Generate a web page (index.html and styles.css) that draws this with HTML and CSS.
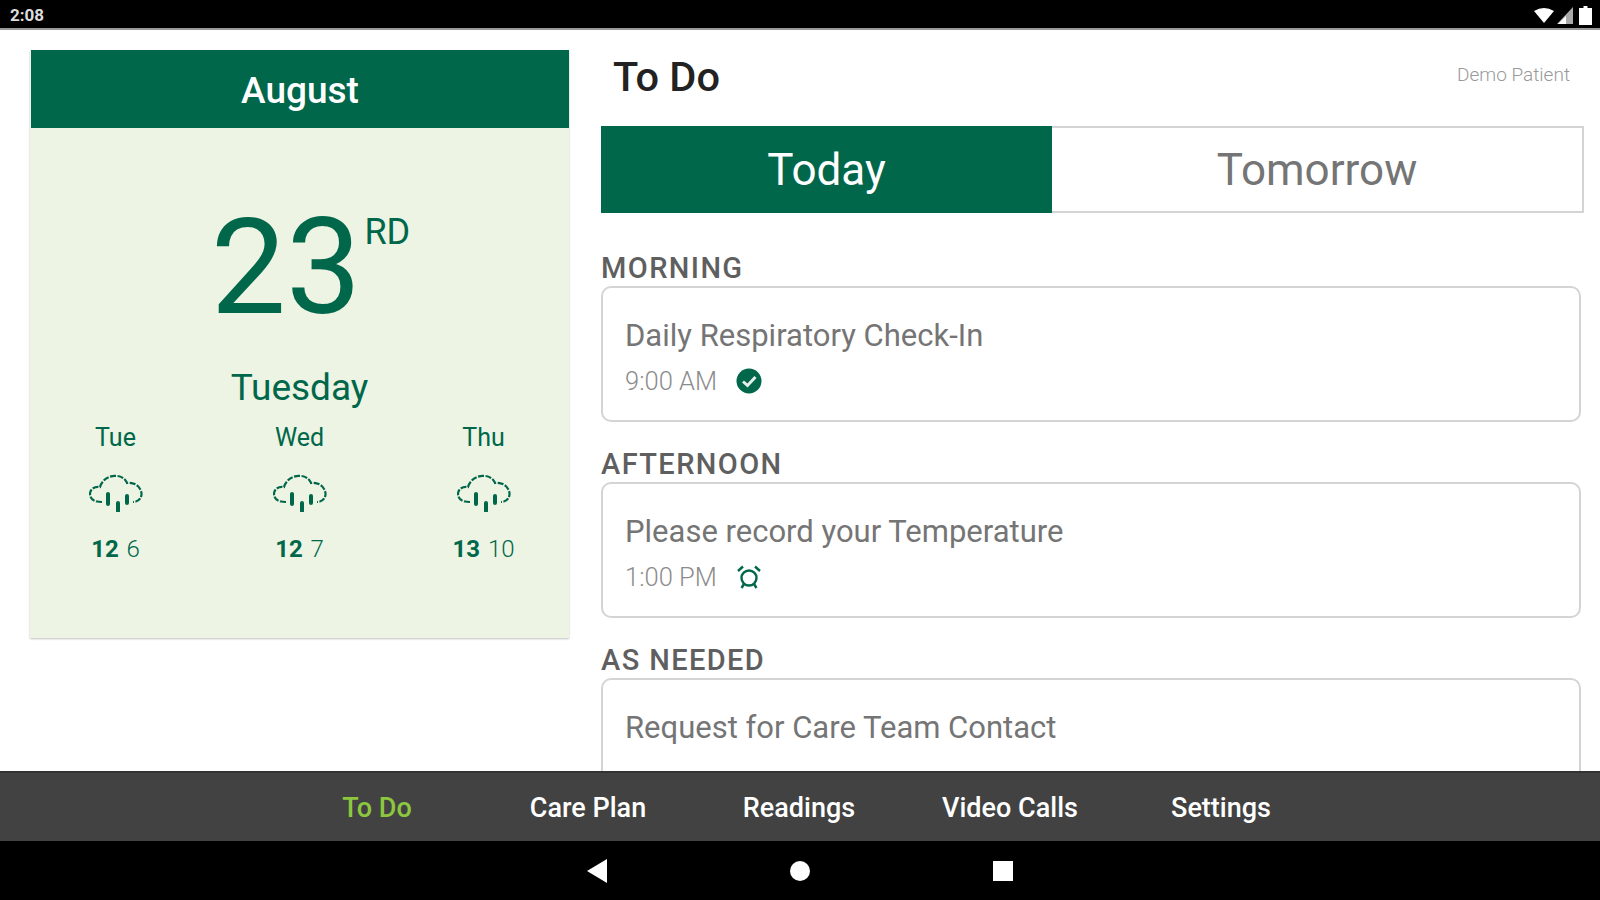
FILE: index.html
```html
<!DOCTYPE html>
<html lang="en">
<head>
  <meta charset="UTF-8">
  <title>To Do</title>
  <link rel="stylesheet" href="styles.css">
</head>
<body>
  <div class="status-bar">
    <span class="clock">2:08</span>
    <div class="status-icons">
      <svg width="20" height="16" viewBox="0 0 20 16"><path d="M0 4 Q10 -2 20 4 L10 16 Z" fill="#fff"/></svg>
      <svg width="16" height="17" viewBox="0 0 16 17"><path d="M16 0 V17 H0 Z" fill="#aaa"/><path d="M9 9 V17 H1 Z" fill="#fff"/></svg>
      <svg class="battery" width="13" height="19" viewBox="0 0 13 19"><path d="M4.5 0 H8.5 V2 H13 V19 H0 V2 H4.5 Z" fill="#fff"/></svg>
    </div>
  </div>

  <div class="main">
    <aside class="calendar">
      <div class="month">August</div>
      <div class="calendar-body">
        <div class="date"><span class="day-num">23</span><span class="suffix">RD</span></div>
        <div class="weekday">Tuesday</div>
        <div class="forecast">
          <div class="fc-day">
            <div class="fc-name">Tue</div>
            <svg class="cloud" width="54" height="38" viewBox="0 0 54 38"><use href="#cloud-icon"/></svg>
            <div class="fc-temp"><b>12</b> 6</div>
          </div>
          <div class="fc-day">
            <div class="fc-name">Wed</div>
            <svg class="cloud" width="54" height="38" viewBox="0 0 54 38"><use href="#cloud-icon"/></svg>
            <div class="fc-temp"><b>12</b> 7</div>
          </div>
          <div class="fc-day">
            <div class="fc-name">Thu</div>
            <svg class="cloud" width="54" height="38" viewBox="0 0 54 38"><use href="#cloud-icon"/></svg>
            <div class="fc-temp"><b>13</b> 10</div>
          </div>
        </div>
      </div>
    </aside>

    <section class="todo">
      <div class="todo-head">
        <h1>To Do</h1>
        <span class="patient">Demo Patient</span>
      </div>
      <div class="tabs">
        <div class="tab active">Today</div>
        <div class="tab">Tomorrow</div>
      </div>

      <h2>MORNING</h2>
      <div class="item">
        <div class="item-title">Daily Respiratory Check-In</div>
        <div class="item-meta">
          <span>9:00 AM</span>
          <svg width="26" height="26" viewBox="0 0 26 26"><circle cx="13" cy="13" r="12.5" fill="#00674b"/><path d="M7 13.5 L11.5 17.5 L19.5 9" fill="none" stroke="#e4efe9" stroke-width="3"/></svg>
        </div>
      </div>

      <h2>AFTERNOON</h2>
      <div class="item">
        <div class="item-title">Please record your Temperature</div>
        <div class="item-meta">
          <span>1:00 PM</span>
          <svg width="26" height="26" viewBox="0 0 26 26" fill="none" stroke="#00674b" stroke-width="2.4"><circle cx="13" cy="14" r="7.5"/><path d="M2 7 L7 2.5 M24 7 L19 2.5 M8 20 L5.5 24 M18 20 L20.5 24"/></svg>
        </div>
      </div>

      <h2>AS NEEDED</h2>
      <div class="item">
        <div class="item-title">Request for Care Team Contact</div>
      </div>
    </section>
  </div>

  <nav class="tabbar">
    <a class="current">To Do</a>
    <a>Care Plan</a>
    <a>Readings</a>
    <a>Video Calls</a>
    <a>Settings</a>
  </nav>

  <div class="nav-bar">
    <svg width="20" height="24" viewBox="0 0 20 24"><path d="M20 0 V24 L0 12 Z" fill="#fff"/></svg>
    <svg width="20" height="20" viewBox="0 0 20 20"><circle cx="10" cy="10" r="10" fill="#fff"/></svg>
    <svg width="20" height="20" viewBox="0 0 20 20"><rect width="20" height="20" fill="#fff"/></svg>
  </div>

  <svg class="defs" width="0" height="0">
    <symbol id="cloud-icon" viewBox="0 0 54 38">
      <path d="M13 28 C5 28 1 25 1 20 C1 15 6 12 11 13 C13 6 20 1 28 2 C33 2 37 6 38 9 C44 8 50 11 52 17 C54 23 50 28 44 28" fill="none" stroke="#00674b" stroke-width="2.2" stroke-dasharray="6 1.5"/>
      <path d="M19 20 V30 M38 22 V29 M29 29 V37" fill="none" stroke="#00674b" stroke-width="4" stroke-linecap="round"/>
    </symbol>
  </svg>
</body>
</html>
```

FILE: styles.css
```css
:root {
  --green: #00674b;
  --panel: #edf4e3;
  --line: #d4d4d4;
  --grey: #757575;
}
* {
  box-sizing: border-box;
}
body {
  margin: 0;
  height: 900px;
  display: flex;
  flex-direction: column;
  overflow: hidden;
  background-color: #fff;
  font-family: Roboto, sans-serif;
}
.status-bar {
  flex: none;
  height: 30px;
  padding: 2px 8px 0 10px;
  display: flex;
  justify-content: space-between;
  align-items: center;
  background-color: #000;
  border-bottom: 2px solid #999;
  color: #ddd;
}
.clock {
  font-size: 17px;
  font-weight: 700;
}
.status-icons {
  display: flex;
  align-items: center;
  gap: 3px;
}
.battery {
  margin-left: 3px;
}
.main {
  flex: 1;
  min-height: 0;
  display: flex;
  overflow: hidden;
}

/* calendar card */
.calendar {
  flex: none;
  width: 539px;
  height: 588px;
  margin: 20px 0 0 30px;
  display: flex;
  flex-direction: column;
  background-color: var(--panel);
  box-shadow: 0 1px 2px rgba(0, 0, 0, 0.25);
}
.month {
  height: 78px;
  margin-left: 1px;
  padding-top: 2px;
  display: flex;
  align-items: center;
  justify-content: center;
  background-color: var(--green);
  color: #fff;
  font-size: 37px;
  font-weight: 500;
}
.calendar-body {
  flex: 1;
  padding-top: 73px;
  color: var(--green);
  text-align: center;
}
.date {
  display: flex;
  justify-content: center;
  align-items: flex-start;
  padding-left: 22px;
  height: 134px;
}
.day-num {
  font-size: 134px;
  line-height: 134px;
  font-weight: 400;
}
.suffix {
  font-size: 36px;
  line-height: 40px;
  margin-top: 11px;
  margin-left: 3px;
}
.weekday {
  margin-top: 31px;
  font-size: 37px;
  line-height: 44px;
}
.forecast {
  display: grid;
  grid-template-columns: repeat(3, 184px);
  justify-content: center;
  margin-top: 13px;
}
.fc-day {
  display: flex;
  flex-direction: column;
  align-items: center;
}
.fc-name {
  font-size: 25px;
  line-height: 30px;
}
.cloud {
  margin-top: 21px;
}
.fc-temp {
  margin-top: 22px;
  font-size: 24px;
  line-height: 30px;
  font-weight: 300;
}
.fc-temp b {
  font-weight: 700;
  margin-right: 2px;
}

/* to do list */
.todo {
  flex: 1;
  min-width: 0;
  margin-left: 32px;
  padding-right: 16px;
}
.todo-head {
  height: 96px;
  padding: 0 14px 4px 12px;
  display: flex;
  justify-content: space-between;
  align-items: center;
}
h1 {
  margin: 0;
  font-size: 41.5px;
  font-weight: 500;
  color: #222;
}
.patient {
  font-size: 19px;
  font-weight: 300;
  color: #999;
  margin-bottom: 4px;
}
.tabs {
  display: flex;
  height: 87px;
  border: 2px solid var(--line);
}
.tab {
  flex: 1;
  display: flex;
  align-items: center;
  justify-content: center;
  font-size: 44px;
  color: var(--grey);
}
.tab.active {
  flex: none;
  width: 451px;
  margin: -2px 0 -2px -2px;
  background-color: var(--green);
  color: #fff;
}
h2 {
  margin: 37px 0 0;
  font-size: 29px;
  line-height: 36px;
  font-weight: 500;
  letter-spacing: 1.4px;
  color: #5f5f5f;
}
.item + h2 {
  margin-top: 24px;
}
.item {
  height: 136px;
  margin-right: 3px;
  padding: 29px 22px 0;
  border: 2px solid var(--line);
  border-radius: 10px;
}
.item-title {
  font-size: 31px;
  line-height: 38px;
  color: var(--grey);
}
.item-meta {
  display: flex;
  align-items: center;
  gap: 19px;
  margin-top: 8px;
  font-size: 25.5px;
  line-height: 36px;
  font-weight: 300;
  color: #8c8c8c;
}

/* bottom bars */
.tabbar {
  flex: none;
  height: 70px;
  display: grid;
  grid-template-columns: repeat(5, 211px);
  justify-content: center;
  align-items: center;
  padding: 2px 2px 0 0;
  background-color: #424242;
  border-top: 2px solid #333;
  color: #fff;
  font-size: 27px;
  font-weight: 500;
  text-align: center;
}
.tabbar .current {
  color: #8dc63f;
}
.nav-bar {
  flex: none;
  height: 59px;
  display: flex;
  justify-content: center;
  align-items: center;
  gap: 183px;
  background-color: #000;
}
.defs {
  position: absolute;
}
```
